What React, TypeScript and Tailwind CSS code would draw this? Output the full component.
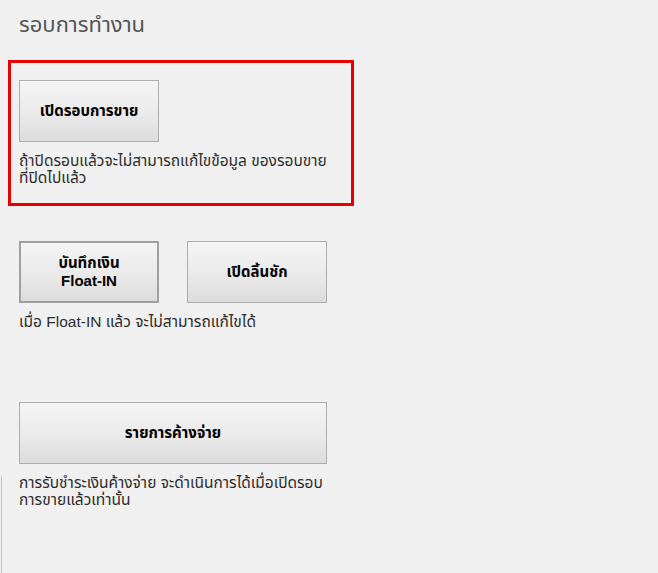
import React from 'react';

const font = { fontFamily: 'Tahoma, "Liberation Sans", "Noto Sans Thai", "DejaVu Sans", sans-serif' };

function WinButton({
  children,
  className = '',
  focused = false,
}: {
  children: React.ReactNode;
  className?: string;
  focused?: boolean;
}) {
  return (
    <button
      className={`flex h-[62px] items-center justify-center bg-gradient-to-b from-[#f4f4f4] via-[#ebebeb] to-[#dcdcdc] text-[15px] leading-[18px] font-bold text-black ${
        focused ? 'border-2 border-[#a0a0a0]' : 'border border-[#adadad]'
      } ${className}`}
    >
      {children}
    </button>
  );
}

export default function App() {
  return (
    <div className="relative h-[573px] w-[658px] overflow-hidden bg-[#f0f0f0]" style={font}>
      <div className="pl-[19px] pt-[12px] text-[22px] leading-[26px] text-[#555]">รอบการทำงาน</div>

      <div className="ml-[8px] mt-[22px] h-[146px] w-[346px] border-[3px] border-[#e80000] pl-[8px] pt-[17px]">
        <WinButton className="w-[140px]">เปิดรอบการขาย</WinButton>
        <p className="mt-[10px] text-[15.5px] leading-[17px] text-[#2e2e2e]">
          ถ้าปิดรอบแล้วจะไม่สามารถแก้ไขข้อมูล ของรอบขาย
          <br />
          ที่ปิดไปแล้ว
        </p>
      </div>

      <div className="pl-[19px]">
        <div className="mt-[35px] flex gap-[28px]">
          <WinButton className="w-[140px] text-center" focused>
            บันทึกเงิน
            <br />
            Float-IN
          </WinButton>
          <WinButton className="w-[140px]">เปิดลิ้นชัก</WinButton>
        </div>
        <p className="mt-[10px] text-[15.5px] leading-[17px] text-[#2e2e2e]">เมื่อ Float-IN แล้ว จะไม่สามารถแก้ไขได้</p>

        <WinButton className="mt-[72px] w-[308px]">รายการค้างจ่าย</WinButton>
        <p className="mt-[10px] text-[15.5px] leading-[17px] text-[#2e2e2e]">
          การรับชำระเงินค้างจ่าย จะดำเนินการได้เมื่อเปิดรอบ
          <br />
          การขายแล้วเท่านั้น
        </p>
      </div>

      <div className="absolute bottom-0 left-[1px] top-[476px] w-px bg-[#c4c4c4]" />
    </div>
  );
}
